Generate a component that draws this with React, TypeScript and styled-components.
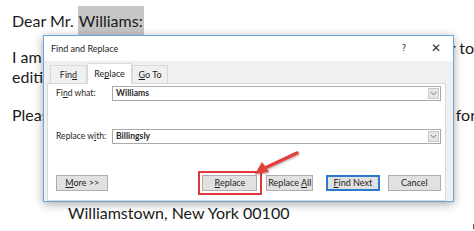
import React from 'react';
import styled, { createGlobalStyle } from 'styled-components';

const GlobalStyle = createGlobalStyle`
  html, body {
    margin: 0;
    padding: 0;
    background: #ffffff;
    overflow: hidden;
  }
`;

const Page = styled.div`
  position: relative;
  width: 474px;
  height: 231px;
  overflow: hidden;
  background: #ffffff;
  font-family: 'Lato', 'Open Sans', sans-serif;
  color: #1a1a1a;
`;

const Document = styled.div`
  display: flex;
  flex-direction: column;
  padding: 11px 0 0 12px;
  font-size: 16px;
`;

const Line = styled.div<{ $top?: number }>`
  display: flex;
  justify-content: space-between;
  align-items: baseline;
  white-space: nowrap;
  height: 20px;
  line-height: 20px;
  margin-top: ${(p) => p.$top ?? 0}px;
`;

const Highlight = styled.span`
  background: #c6c6c6;
  padding: 5px 1px 6px;
`;

const Tail = styled.span<{ $cut?: number; $lift?: number }>`
  margin-right: ${(p) => -(p.$cut ?? 0)}px;
  align-self: flex-start;
  margin-top: ${(p) => -(p.$lift ?? 0)}px;
`;

const Address = styled.div`
  margin: 78px 0 0 68px;
  white-space: nowrap;
  line-height: 20px;
  font-size: 16px;
`;

const Dialog = styled.div`
  position: absolute;
  left: 43px;
  top: 35px;
  width: 409px;
  height: 165px;
  border: 1px solid #6aa5dc;
  background: #f0f0f0;
  box-shadow: 0 2px 9px rgba(0, 0, 0, 0.35);
  display: flex;
  flex-direction: column;
  font-family: 'Lato', 'Noto Sans', sans-serif;
  font-size: 8.6px;
  color: #1e1e1e;
  white-space: nowrap;
`;

const TitleBar = styled.div`
  height: 25px;
  background: #ffffff;
  display: flex;
  align-items: center;
  padding: 0 12px 0 7px;
  font-size: 9px;
`;

const Title = styled.div`
  flex: 1;
`;

const TitleButton = styled.div<{ $w: number; $big?: boolean }>`
  width: ${(p) => p.$w}px;
  text-align: ${(p) => (p.$big ? 'right' : 'center')};
  font-size: ${(p) => (p.$big ? 12 : 9)}px;
  color: #333;
  font-family: 'DejaVu Sans', sans-serif;
`;

const TabStrip = styled.div`
  display: flex;
  align-items: flex-end;
  height: 22px;
  padding-left: 6px;
`;

const Tab = styled.div<{ $active?: boolean; $w: number }>`
  width: ${(p) => p.$w}px;
  height: ${(p) => (p.$active ? 21 : 18)}px;
  box-sizing: border-box;
  border: 1px solid #d9d9d9;
  border-bottom: none;
  background: ${(p) => (p.$active ? '#ffffff' : '#f0f0f0')};
  margin-bottom: ${(p) => (p.$active ? -1 : 0)}px;
  position: relative;
  display: flex;
  align-items: center;
  justify-content: center;
  font-size: 9px;
`;

const Panel = styled.div`
  margin: 0 7px 0 3px;
  height: 115px;
  background: #ffffff;
  border: 1px solid #d9d9d9;
  display: flex;
  flex-direction: column;
  padding: 2px 4px 0 8px;
`;

const FieldRow = styled.div<{ $top?: number }>`
  display: flex;
  align-items: center;
  margin-top: ${(p) => p.$top ?? 0}px;
`;

const Label = styled.div`
  width: 56px;
`;

const Combo = styled.div`
  flex: 1;
  height: 13px;
  border: 1px solid #a9a9a9;
  display: flex;
  align-items: center;
  padding-left: 3px;
`;

const ComboText = styled.div`
  flex: 1;
  font-weight: 700;
  color: #2a2a2a;
`;

const ComboArrow = styled.div`
  width: 11px;
  height: 11px;
  margin-right: 1px;
  background: #e6e6e6;
  border: 1px solid #c9c9c9;
  box-sizing: border-box;
  display: flex;
  align-items: center;
  justify-content: center;
`;

const ButtonRow = styled.div`
  display: flex;
  align-items: center;
  margin-top: 27px;
`;

const Button = styled.div<{ $w: number; $primary?: boolean; $gap?: number }>`
  width: ${(p) => p.$w}px;
  height: 16px;
  box-sizing: border-box;
  margin-left: ${(p) => p.$gap ?? 0}px;
  background: #e1e1e1;
  border: ${(p) => (p.$primary ? '2px solid #2a7ad0' : '1px solid #adadad')};
  display: flex;
  align-items: center;
  justify-content: center;
  font-size: 9px;
`;

const RedBox = styled.div`
  margin-left: 90px;
  padding: 2px 3px 2px 2px;
  border: 2px solid #e0383b;
  display: flex;
`;

const ArrowLayer = styled.svg`
  position: absolute;
  left: 0;
  top: 0;
  width: 474px;
  height: 231px;
  pointer-events: none;
`;

const Corner = styled.div`
  position: absolute;
  right: 0;
  bottom: 2px;
  width: 1px;
  height: 5px;
  background: #555;
`;

const Chevron = () => (
  <svg width="7" height="5" viewBox="0 0 7 5">
    <path d="M0.8 1 L3.5 3.8 L6.2 1" fill="none" stroke="#6d6d6d" strokeWidth="0.9" />
  </svg>
);

export default function App() {
  return (
    <Page>
      <GlobalStyle />
      <Document>
        <Line>
          <span>
            Dear Mr. <Highlight>Williams:</Highlight>
          </span>
        </Line>
        <Line $top={16}>
          <span>I am</span>
          <Tail $cut={0} $lift={9}>r to</Tail>
        </Line>
        <Line>
          <span>edition</span>
        </Line>
        <Line $top={18}>
          <span>Please</span>
          <Tail $cut={2}>for</Tail>
        </Line>
      </Document>
      <Address>Williamstown, New York 00100</Address>
      <Corner />

      <Dialog>
        <TitleBar>
          <Title>Find and Replace</Title>
          <TitleButton $w={14}>?</TitleButton>
          <TitleButton $w={30} $big>
            ✕
          </TitleButton>
        </TitleBar>
        <TabStrip>
          <Tab $w={37}>
            <span>
              Fin<u>d</u>
            </span>
          </Tab>
          <Tab $w={45} $active>
            <span>
              Re<u>p</u>lace
            </span>
          </Tab>
          <Tab $w={36}>
            <span>
              <u>G</u>o To
            </span>
          </Tab>
        </TabStrip>
        <Panel>
          <FieldRow>
            <Label>
              Fi<u>n</u>d what:
            </Label>
            <Combo>
              <ComboText>Williams</ComboText>
              <ComboArrow>
                <Chevron />
              </ComboArrow>
            </Combo>
          </FieldRow>
          <FieldRow $top={28}>
            <Label>
              Replace w<u>i</u>th:
            </Label>
            <Combo>
              <ComboText>Billingsly</ComboText>
              <ComboArrow>
                <Chevron />
              </ComboArrow>
            </Combo>
          </FieldRow>
          <ButtonRow>
            <Button $w={53}>
              <span>
                <u>M</u>ore &gt;&gt;
              </span>
            </Button>
            <RedBox>
              <Button $w={55}>
                <span>
                  <u>R</u>eplace
                </span>
              </Button>
            </RedBox>
            <Button $w={47} $gap={4}>
              <span>
                Replace <u>A</u>ll
              </span>
            </Button>
            <Button $w={54} $gap={13} $primary>
              <span>
                <u>F</u>ind Next
              </span>
            </Button>
            <Button $w={54} $gap={8}>
              Cancel
            </Button>
          </ButtonRow>
        </Panel>
      </Dialog>

      <ArrowLayer viewBox="0 0 474 231">
        <defs>
          <filter id="sh" x="-20%" y="-20%" width="140%" height="140%">
            <feDropShadow dx="0.5" dy="1" stdDeviation="0.8" floodColor="#000" floodOpacity="0.35" />
          </filter>
        </defs>
        <g filter="url(#sh)">
          <line x1="297" y1="153" x2="265" y2="168" stroke="#e2403c" strokeWidth="3.5" strokeLinecap="round" />
          <polygon points="255,174 262,162 269,172" fill="#e2403c" />
        </g>
      </ArrowLayer>
    </Page>
  );
}
